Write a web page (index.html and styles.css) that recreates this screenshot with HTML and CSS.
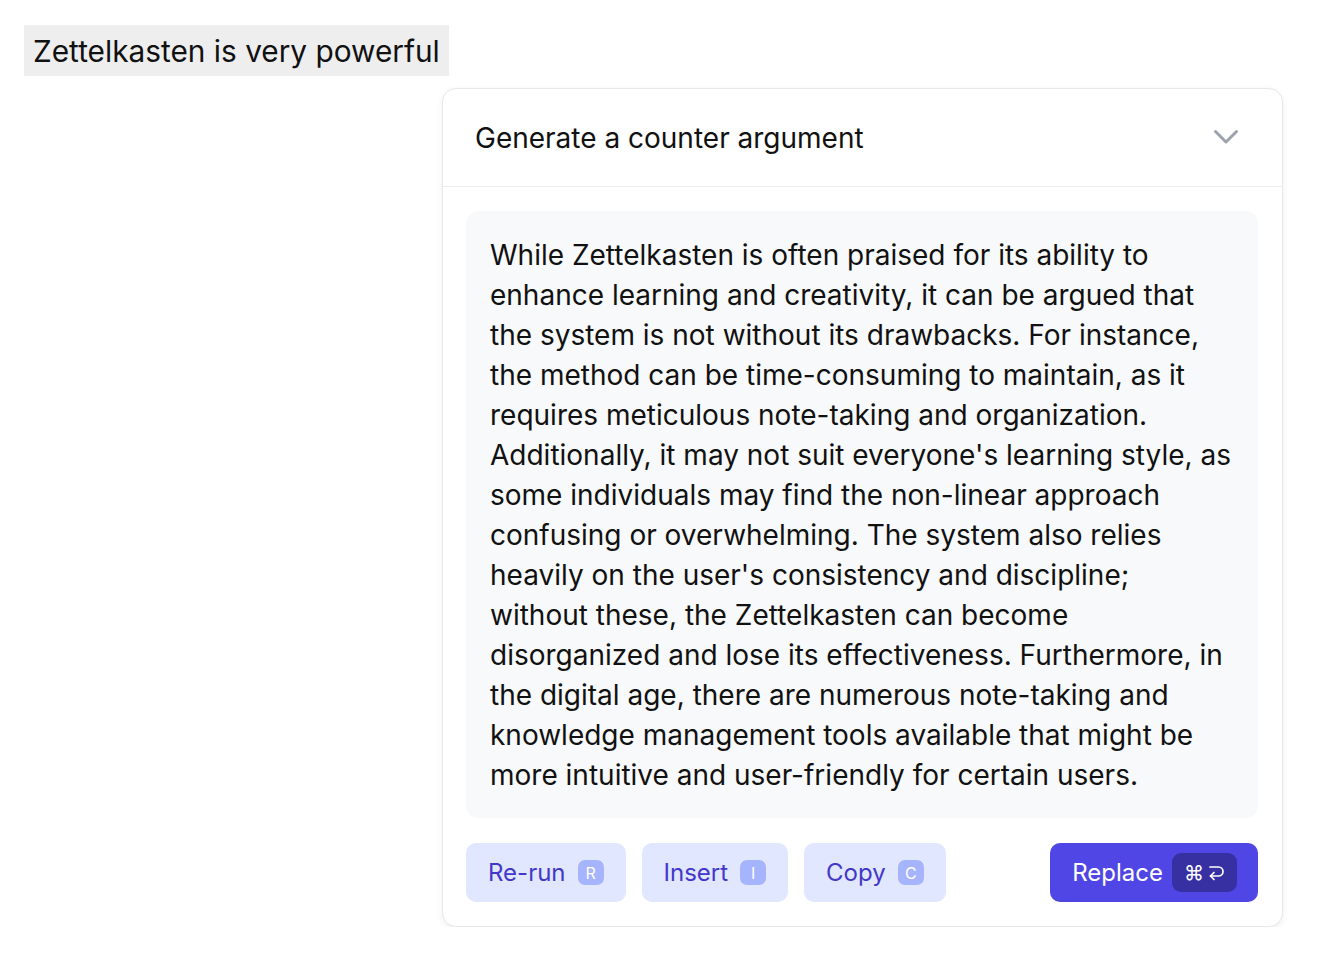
FILE: index.html
```html
<!DOCTYPE html>
<html>
<head>
<meta charset="utf-8">
<link rel="stylesheet" href="styles.css">
</head>
<body>
<div class="page">
  <div class="note"><span class="note-text">Zettelkasten is very powerful</span></div>
  <div class="card">
    <div class="card-head">
      <span class="head-title">Generate a counter argument</span>
      <svg class="chev" width="26" height="16" viewBox="0 0 26 16" fill="none" stroke="#9ca3af" stroke-width="3" stroke-linecap="round" stroke-linejoin="round"><path d="M2.5 2.5L13 13L23.5 2.5"/></svg>
    </div>
    <div class="card-body">
      <p class="result">While Zettelkasten is often praised for its ability to<br>enhance learning and creativity, it can be argued that<br>the system is not without its drawbacks. For instance,<br>the method can be time-consuming to maintain, as it<br>requires meticulous note-taking and organization.<br>Additionally, it may not suit everyone's learning style, as<br>some individuals may find the non-linear approach<br>confusing or overwhelming. The system also relies<br>heavily on the user's consistency and discipline;<br>without these, the Zettelkasten can become<br>disorganized and lose its effectiveness. Furthermore, in<br>the digital age, there are numerous note-taking and<br>knowledge management tools available that might be<br>more intuitive and user-friendly for certain users.</p>
      <div class="actions">
        <button class="btn">Re-run <span class="kbd">R</span></button>
        <button class="btn">Insert <span class="kbd">I</span></button>
        <button class="btn">Copy <span class="kbd">C</span></button>
        <button class="btn primary">Replace <span class="kbd dark">⌘<svg width="17" height="18" viewBox="0 0 17 18" fill="none" stroke="#fff" stroke-width="1.7" stroke-linecap="round" stroke-linejoin="round"><path d="M2 3h8.5a4.5 4.5 0 0 1 0 9H2.5"/><path d="M6 8.5L2.5 12L6 15.5"/></svg></span></button>
      </div>
    </div>
  </div>
</div>
</body>
</html>
```
FILE: styles.css
```css
* { box-sizing: border-box; }
html, body { margin: 0; padding: 0; background: #fff; }
body { font-family: Inter, "Noto Sans", sans-serif; color: #111; }
.page { padding: 25px 0 0 24px; width: 1330px; }
.note { display: inline-block; background: #eeeeee; padding: 0 9px; height: 51px; line-height: 53px; font-size: 29.8px; color: #111; }
.card {
  margin: 12px 0 0 418px;
  width: 841px;
  border: 1px solid #e8e8ea;
  border-radius: 14px;
  background: #fff;
  box-shadow: 0 2px 6px rgba(0,0,0,0.07);
}
.card-head {
  height: 98px;
  display: flex;
  align-items: center;
  justify-content: space-between;
  padding: 0 43px 0 32px;
  border-bottom: 1px solid #ececef;
  font-size: 28px;
  color: #111;
}
.chev { display: block; margin-top: -2px; }
.card-body { padding: 24px 24px 24px 23px; }
.result {
  margin: 0;
  background: #f8f9fb;
  border-radius: 12px;
  padding: 24px 10px 23px 24px;
  font-size: 28px;
  line-height: 40px;
  white-space: nowrap;
  color: #111;
}
.actions { display: flex; gap: 16px; margin-top: 25px; }
.btn {
  font-family: inherit;
  height: 59px;
  border: none;
  border-radius: 10px;
  background: #e0e7ff;
  color: #4338ca;
  font-size: 24px;
  padding: 0 22px;
  display: flex;
  align-items: center;
  gap: 12px;
}
.kbd {
  display: inline-flex; align-items: center; justify-content: center;
  background: #a5b4fc; color: #fff;
  font-size: 16px;
  height: 25px; min-width: 26px; padding: 0 6px;
  border-radius: 7px;
}
.btn.primary { margin-left: auto; background: #4f46e5; color: #fff; padding: 0 21px 0 22px; gap: 9px; }
.kbd.dark { background: #3730a3; height: 39px; min-width: 64px; padding: 0 12px; border-radius: 9px; font-size: 20px; gap: 4px; }
```
